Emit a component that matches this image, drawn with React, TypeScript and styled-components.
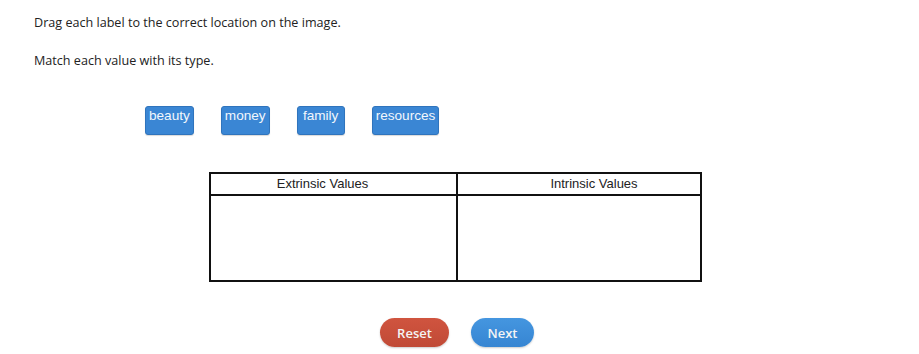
import React from "react";
import styled, { createGlobalStyle } from "styled-components";

const GlobalStyle = createGlobalStyle`
  html, body {
    margin: 0;
    padding: 0;
    background: #ffffff;
  }
`;

const Page = styled.div`
  width: 919px;
  height: 354px;
  padding: 13px 0 0 34px;
  box-sizing: border-box;
  font-family: "Open Sans", "Liberation Sans", sans-serif;
  color: #222;
  overflow: hidden;
`;

const Instruction = styled.p`
  margin: 0 0 19px;
  font-size: 12.6px;
  line-height: 19px;
`;

const Stage = styled.div`
  display: flex;
  flex-direction: column;
  padding-top: 17px;
`;

const LabelRow = styled.div`
  display: flex;
  gap: 27px;
  margin-left: 111px;
`;

const Label = styled.div`
  min-width: 48px;
  height: 29px;
  padding: 1px 3px 0;
  box-sizing: border-box;
  background: #3a86d4;
  border: 1px solid #2f74bd;
  border-radius: 3px;
  color: #f2f7fc;
  font-family: "Liberation Sans", Arial, sans-serif;
  font-size: 13.6px;
  line-height: 16px;
  text-align: center;
  box-shadow: 0 1px 1px rgba(0, 0, 0, 0.15);
`;

const Table = styled.div`
  display: grid;
  grid-template-columns: 247px 244px;
  grid-template-rows: 22px 84px;
  width: 493px;
  margin: 37px 0 0 175px;
  border: 2px solid #111;
  box-sizing: border-box;
  font-family: "Liberation Sans", Arial, sans-serif;
`;

const HeaderCell = styled.div<{ $shift: number; $last?: boolean }>`
  border-bottom: 2px solid #111;
  border-right: ${(p) => (p.$last ? "none" : "2px solid #111")};
  font-size: 13px;
  line-height: 20px;
  color: #222;
  text-align: center;
  padding-left: ${(p) => (p.$shift > 0 ? p.$shift : 0)}px;
  padding-right: ${(p) => (p.$shift < 0 ? -p.$shift : 0)}px;
`;

const DropCell = styled.div<{ $last?: boolean }>`
  border-right: ${(p) => (p.$last ? "none" : "2px solid #111")};
`;

const Actions = styled.div`
  display: flex;
  gap: 22px;
  margin: 36px 0 0 346px;
`;

const Pill = styled.button<{ $kind: "reset" | "next" }>`
  height: 29px;
  padding: 0;
  width: ${(p) => (p.$kind === "reset" ? "69px" : "63px")};
  border: none;
  border-radius: 15px;
  font-family: "Open Sans", "Liberation Sans", sans-serif;
  font-size: 13px;
  font-weight: 600;
  color: #f4f4f4;
  background: ${(p) =>
    p.$kind === "reset"
      ? "linear-gradient(#d0543f, #c04a36)"
      : "linear-gradient(#4596e0, #3685d2)"};
  box-shadow: 0 1px 2px rgba(0, 0, 0, 0.2);
  cursor: pointer;
`;

const labels = ["beauty", "money", "family", "resources"];

export default function App() {
  return (
    <Page>
      <GlobalStyle />
      <Instruction>Drag each label to the correct location on the image.</Instruction>
      <Instruction>Match each value with its type.</Instruction>
      <Stage>
        <LabelRow>
          {labels.map((l) => (
            <Label key={l}>{l}</Label>
          ))}
        </LabelRow>
        <Table>
          <HeaderCell $shift={-22}>Extrinsic Values</HeaderCell>
          <HeaderCell $shift={28} $last>
            Intrinsic Values
          </HeaderCell>
          <DropCell />
          <DropCell $last />
        </Table>
        <Actions>
          <Pill $kind="reset">Reset</Pill>
          <Pill $kind="next">Next</Pill>
        </Actions>
      </Stage>
    </Page>
  );
}
